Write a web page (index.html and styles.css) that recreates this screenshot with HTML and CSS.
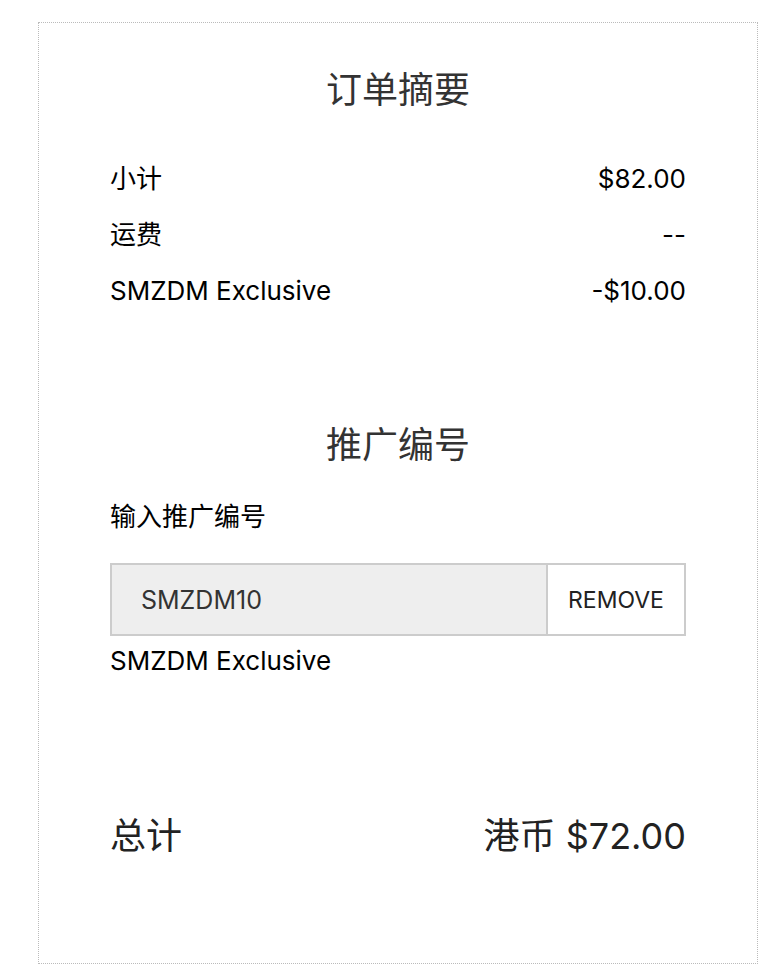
FILE: index.html
```html
<!DOCTYPE html>
<html lang="zh">
<head>
    <meta charset="UTF-8">
    <meta name="viewport" content="width=device-width, initial-scale=1.0">
    <title>订单摘要</title>
    <link rel="stylesheet" href="styles.css">
</head>
<body>
    <div id="summary">
        <div class="sectionTitle">订单摘要</div>
        <div class="lineList">
            <div class="lineRow">
                <div class="lineLabel">小计</div>
                <div class="lineValue">$82.00</div>
            </div>
            <div class="lineRow">
                <div class="lineLabel">运费</div>
                <div class="lineValue">--</div>
            </div>
            <div class="lineRow">
                <div class="lineLabel">SMZDM Exclusive</div>
                <div class="lineValue">-$10.00</div>
            </div>
        </div>
        <div class="sectionTitle promoTitle">推广编号</div>
        <div class="promoLabel">输入推广编号</div>
        <div class="promoBox">
            <div class="promoInput">SMZDM10</div>
            <div class="promoButton">REMOVE</div>
        </div>
        <div class="promoNote">SMZDM Exclusive</div>
        <div class="totalRow">
            <div>总计</div>
            <div>港币 $72.00</div>
        </div>
    </div>
</body>
</html>
```

FILE: styles.css
```css
* {
    margin: 0;
    padding: 0;
    box-sizing: border-box;
}
body {
    background-color: white;
    color: black;
    font-family: 'Inter', 'Noto Sans CJK SC', sans-serif;
}
#summary {
    margin: 22px 0 0 38px;
    width: 720px;
    height: 942px;
    border: 1px dotted #bbb;
    padding: 43px 71px 0 71px;
}
.sectionTitle {
    font-size: 36px;
    line-height: 48px;
    text-align: center;
    color: #333;
}
.lineList {
    margin-top: 37px;
}
.lineRow {
    display: flex;
    justify-content: space-between;
    font-size: 26px;
    line-height: 56px;
}
.promoTitle {
    margin-top: 102px;
}
.promoLabel {
    margin-top: 32px;
    font-size: 26px;
    line-height: 32px;
}
.promoBox {
    display: flex;
    margin-top: 30px;
    height: 73px;
    border: 2px solid #ccc;
}
.promoInput {
    flex: 1;
    display: flex;
    align-items: center;
    padding-left: 29px;
    background-color: #eee;
    color: #333;
    font-size: 25px;
}
.promoButton {
    width: 138px;
    display: flex;
    align-items: center;
    justify-content: center;
    border-left: 2px solid #ccc;
    font-size: 23px;
    color: #222;
}
.promoNote {
    margin-top: 9px;
    font-size: 26px;
    line-height: 32px;
}
.totalRow {
    display: flex;
    justify-content: space-between;
    margin-top: 135px;
    font-size: 36px;
    line-height: 48px;
    color: #222;
}
```
